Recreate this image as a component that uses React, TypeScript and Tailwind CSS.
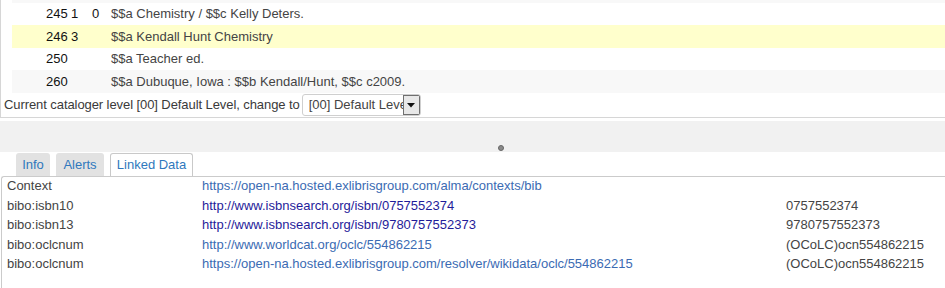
import React from "react";

const rows = [
  { tag: "245", i1: "1", i2: "0", text: "$$a Chemistry / $$c Kelly Deters.", bg: "bg-white", h: "h-[22px]" },
  { tag: "246", i1: "3", i2: "", text: "$$a Kendall Hunt Chemistry", bg: "bg-[#ffffcc]", h: "h-[23px]" },
  { tag: "250", i1: "", i2: "", text: "$$a Teacher ed.", bg: "bg-white", h: "h-[22px]" },
  { tag: "260", i1: "", i2: "", text: "$$a Dubuque, Iowa : $$b Kendall/Hunt, $$c c2009.", bg: "bg-[#f8f8f8]", h: "h-[23px]" },
];

const linked = [
  { label: "Context", link: "https://open-na.hosted.exlibrisgroup.com/alma/contexts/bib", dark: false, value: "" },
  { label: "bibo:isbn10", link: "http://www.isbnsearch.org/isbn/0757552374", dark: true, value: "0757552374" },
  { label: "bibo:isbn13", link: "http://www.isbnsearch.org/isbn/9780757552373", dark: true, value: "9780757552373" },
  { label: "bibo:oclcnum", link: "http://www.worldcat.org/oclc/554862215", dark: false, value: "(OCoLC)ocn554862215" },
  { label: "bibo:oclcnum", link: "https://open-na.hosted.exlibrisgroup.com/resolver/wikidata/oclc/554862215", dark: false, value: "(OCoLC)ocn554862215" },
];

export default function App() {
  return (
    <div className="w-[945px] h-[288px] overflow-hidden bg-white font-['Liberation_Sans',Arial,sans-serif] text-[13px] text-[#444]">
      {/* MARC record section */}
      <div className="h-[118px] border-l border-b border-[#d6d6d6]">
        <div className="ml-[11px] h-[3px] bg-[#f8f8f8]" />
        {rows.map((r, i) => (
          <div key={i} className={`ml-[11px] flex items-center ${r.h} ${r.bg}`}>
            <span className="ml-[34px] w-[25px] text-[#111]">{r.tag}</span>
            <span className="w-[21px] text-[#111]">{r.i1}</span>
            <span className="w-[19px] text-[#111]">{r.i2}</span>
            <span className="whitespace-nowrap">{r.text}</span>
          </div>
        ))}
        <div className="h-[24px] flex items-center pl-[3px]">
          <span className="whitespace-nowrap text-[#3a3a3a] tracking-[-0.08px]">Current cataloger level [00] Default Level, change to</span>
          <div className="ml-[2px] relative w-[119px] h-[22px] border border-[#cfcfcf] rounded-[3px] bg-white flex items-center overflow-hidden">
            <span className="pl-[6px] whitespace-nowrap text-[#444]">[00] Default Level</span>
            <div className="absolute right-0 top-0 bottom-0 w-[17px] bg-[#e8e8e8] border border-[#6f6f6f] flex items-center justify-center">
              <svg width="8" height="5" viewBox="0 0 8 5">
                <polygon points="0,0 8,0 4,4.5" fill="#111" />
              </svg>
            </div>
          </div>
        </div>
      </div>

      {/* splitter */}
      <div className="mt-[3px] h-[31px] bg-[#f1f1f1] flex items-end">
        <div className="ml-[498px] mb-[1px] w-[6px] h-[6px] rounded-full bg-[#8a8a8a] border border-[#666]" />
      </div>

      {/* tabs */}
      <div className="h-[24px] flex items-end gap-[6px] pl-[16px]">
        <div className="w-[34px] h-[23px] bg-[#e2e2e2] rounded-t-[3px] flex items-center justify-center text-[#2f78bd]">Info</div>
        <div className="w-[48px] h-[23px] bg-[#e2e2e2] rounded-t-[3px] flex items-center justify-center text-[#2f78bd]">Alerts</div>
        <div className="w-[83px] h-[23px] bg-white border-t border-l border-r border-[#c9c9c9] rounded-t-[3px] flex items-center justify-center text-[#2f78bd]">Linked Data</div>
      </div>

      {/* panel */}
      <div className="ml-[1px] h-[200px] border-l border-t border-[#cbcbcb] rounded-tl-[3px]">
        <div className="-mt-px">
          {linked.map((l, i) => (
            <div key={i} className="h-[19.6px] flex items-center whitespace-nowrap">
              <span className="pl-[5px] w-[200px]">{l.label}</span>
              <span className={`w-[584px] ${l.dark ? "text-[#1f1c9a]" : "text-[#3b6bb3]"}`}>{l.link}</span>
              <span>{l.value}</span>
            </div>
          ))}
        </div>
      </div>
    </div>
  );
}
